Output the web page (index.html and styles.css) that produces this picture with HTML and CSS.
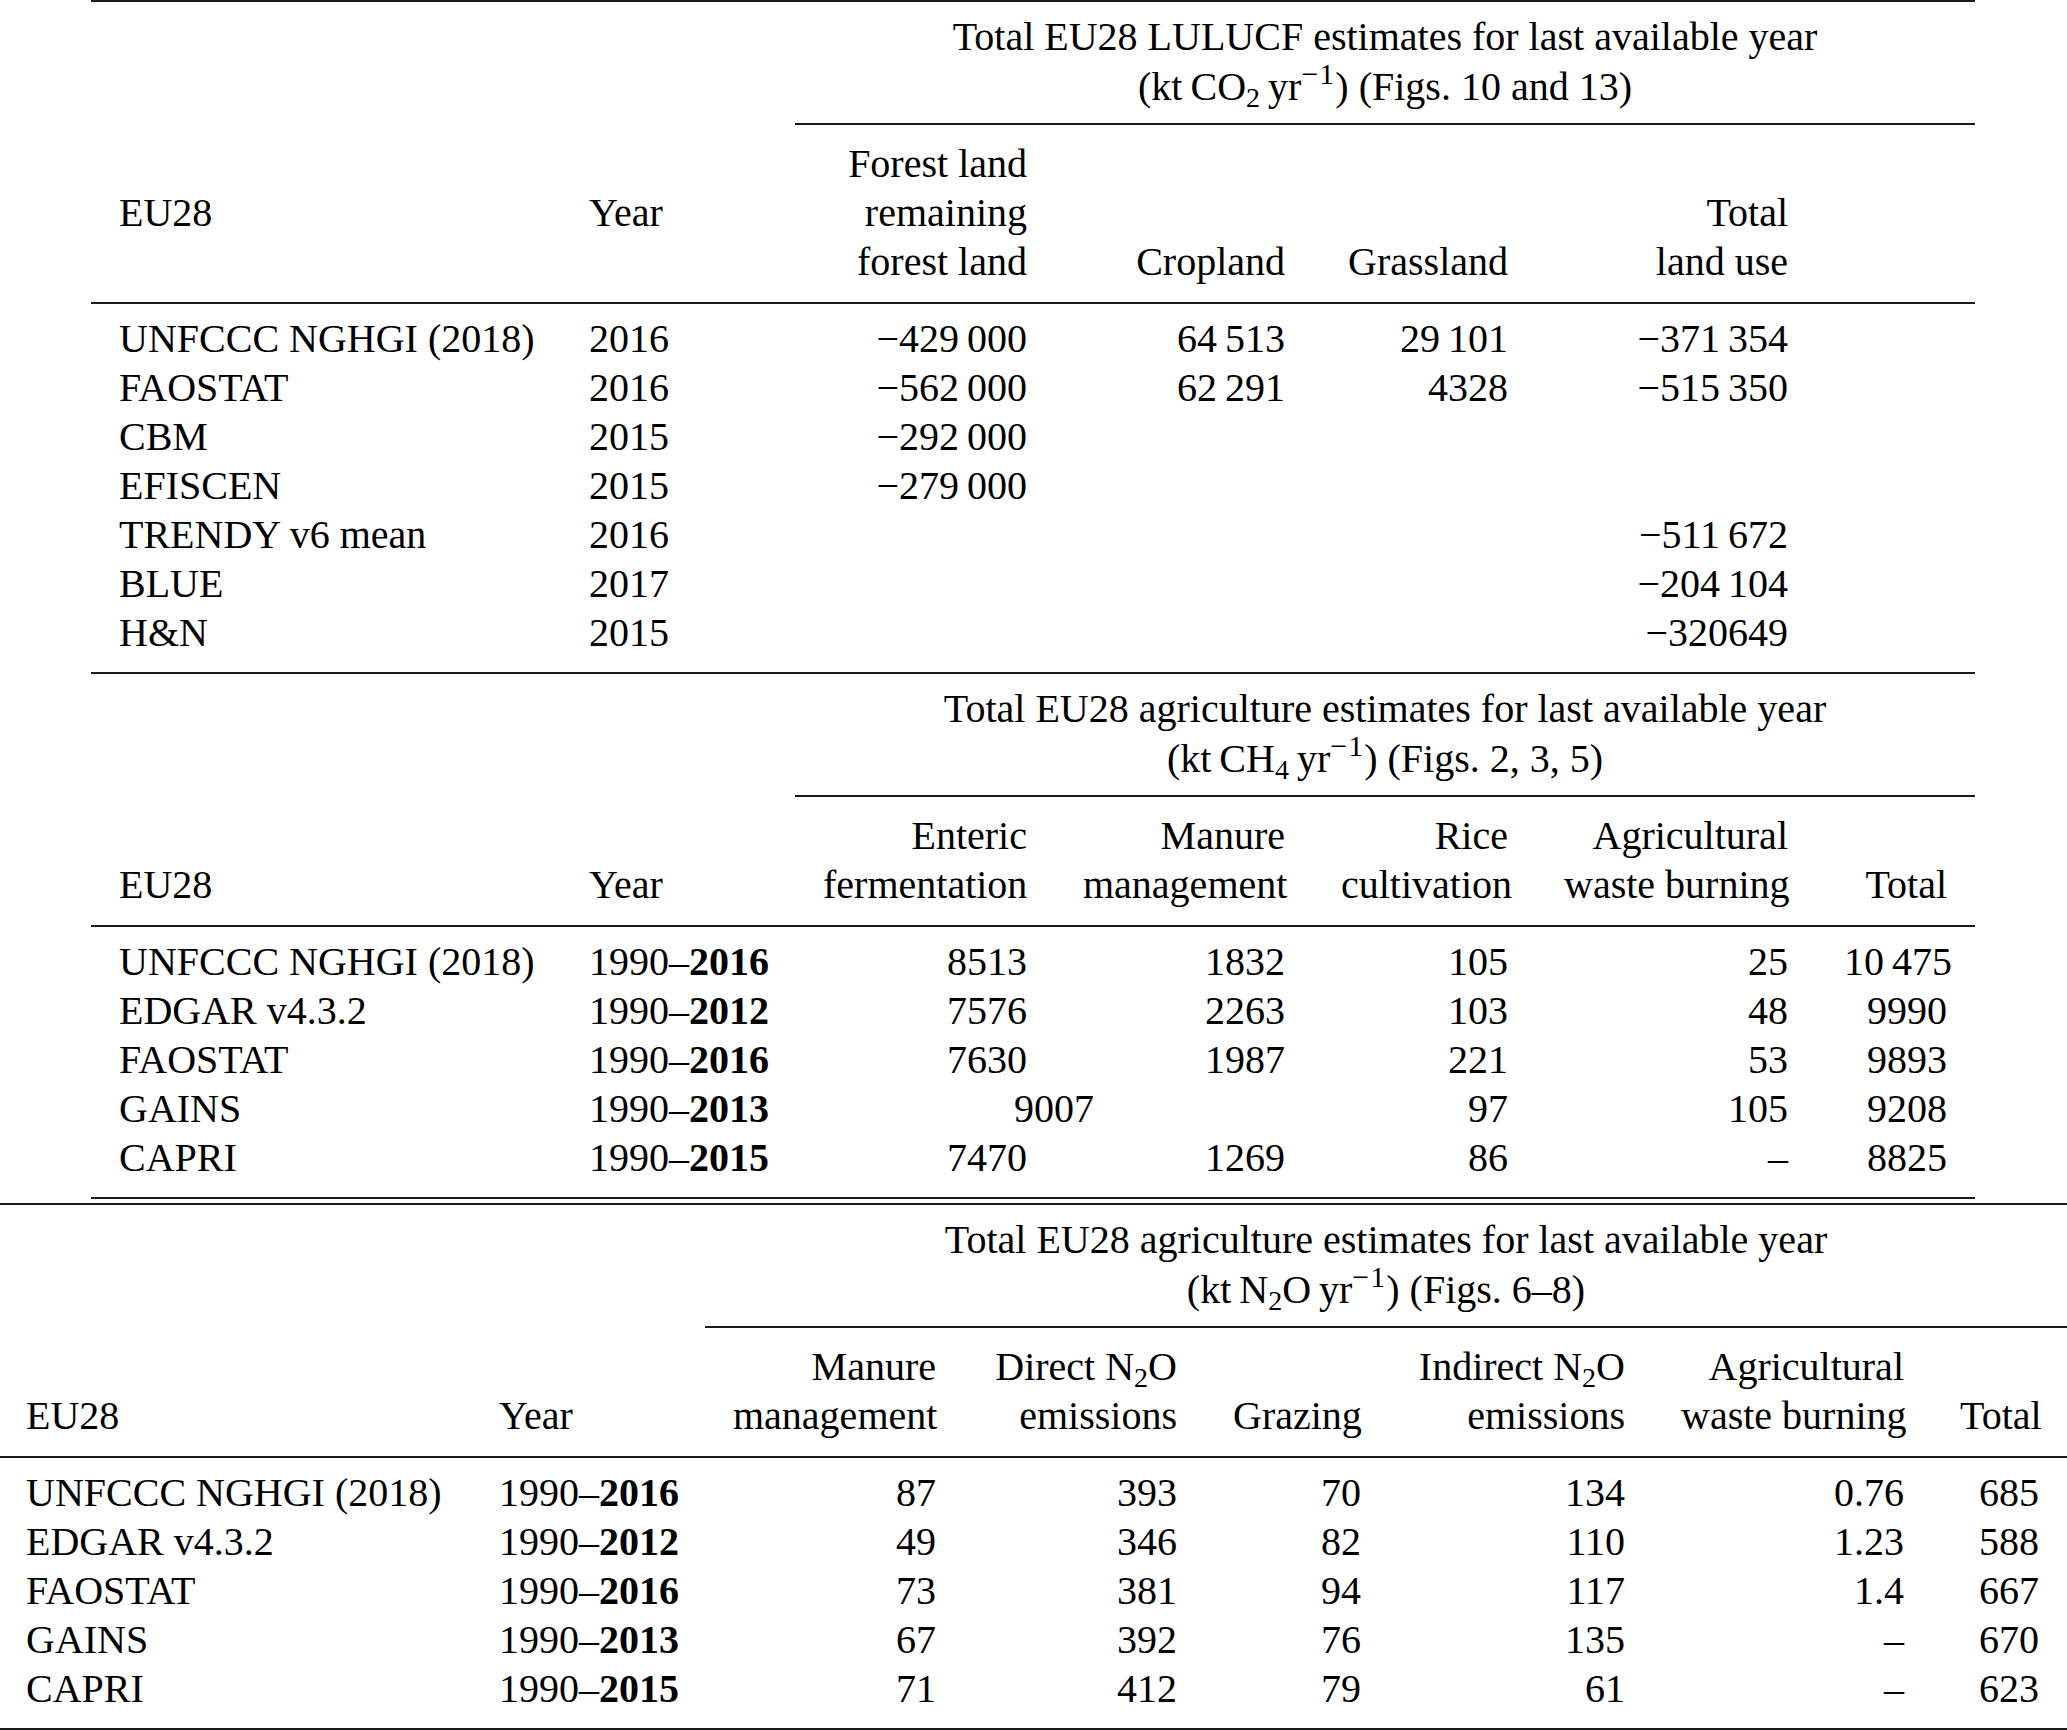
FILE: index.html
```html
<!DOCTYPE html>
<html lang="en">
<head>
<meta charset="utf-8">
<title>EU28 LULUCF and agriculture estimates</title>
<link rel="stylesheet" href="styles.css">
</head>
<body>
<div class="page">

  <!-- Table 1: LULUCF -->
  <div class="tbl narrow first-tbl">
    <div class="row title-row">
      <div class="title">Total EU28 LULUCF estimates for last available year<br>(kt&thinsp;CO<sub>2</sub>&thinsp;yr<sup>&minus;1</sup>) (Figs. 10 and 13)</div>
    </div>
    <div class="row head-row">
      <div class="cell mid">EU28</div>
      <div class="cell mid">Year</div>
      <div class="cell r">Forest land<br>remaining<br>forest land</div>
      <div class="cell r">Cropland</div>
      <div class="cell r">Grassland</div>
      <div class="cell r">Total<br>land use</div>
      <div class="cell"></div>
    </div>
    <div class="body">
      <div class="row"><div class="cell">UNFCCC NGHGI (2018)</div><div class="cell">2016</div><div class="cell r">&minus;429&thinsp;000</div><div class="cell r">64&thinsp;513</div><div class="cell r">29&thinsp;101</div><div class="cell r">&minus;371&thinsp;354</div><div class="cell"></div></div>
      <div class="row"><div class="cell">FAOSTAT</div><div class="cell">2016</div><div class="cell r">&minus;562&thinsp;000</div><div class="cell r">62&thinsp;291</div><div class="cell r">4328</div><div class="cell r">&minus;515&thinsp;350</div><div class="cell"></div></div>
      <div class="row"><div class="cell">CBM</div><div class="cell">2015</div><div class="cell r">&minus;292&thinsp;000</div><div class="cell"></div><div class="cell"></div><div class="cell"></div><div class="cell"></div></div>
      <div class="row"><div class="cell">EFISCEN</div><div class="cell">2015</div><div class="cell r">&minus;279&thinsp;000</div><div class="cell"></div><div class="cell"></div><div class="cell"></div><div class="cell"></div></div>
      <div class="row"><div class="cell">TRENDY v6 mean</div><div class="cell">2016</div><div class="cell"></div><div class="cell"></div><div class="cell"></div><div class="cell r">&minus;511&thinsp;672</div><div class="cell"></div></div>
      <div class="row"><div class="cell">BLUE</div><div class="cell">2017</div><div class="cell"></div><div class="cell"></div><div class="cell"></div><div class="cell r">&minus;204&thinsp;104</div><div class="cell"></div></div>
      <div class="row"><div class="cell">H&amp;N</div><div class="cell">2015</div><div class="cell"></div><div class="cell"></div><div class="cell"></div><div class="cell r">&minus;320649</div><div class="cell"></div></div>
    </div>
  </div>

  <!-- Table 2: CH4 -->
  <div class="tbl narrow">
    <div class="row title-row">
      <div class="title">Total EU28 agriculture estimates for last available year<br>(kt&thinsp;CH<sub>4</sub>&thinsp;yr<sup>&minus;1</sup>) (Figs. 2, 3, 5)</div>
    </div>
    <div class="row head-row">
      <div class="cell">EU28</div>
      <div class="cell">Year</div>
      <div class="cell r">Enteric<br>fermentation</div>
      <div class="cell r">Manure<br>management</div>
      <div class="cell r">Rice<br>cultivation</div>
      <div class="cell r">Agricultural<br>waste burning</div>
      <div class="cell r">Total</div>
    </div>
    <div class="body">
      <div class="row"><div class="cell">UNFCCC NGHGI (2018)</div><div class="cell">1990&ndash;<b>2016</b></div><div class="cell r">8513</div><div class="cell r">1832</div><div class="cell r">105</div><div class="cell r">25</div><div class="cell r">10&thinsp;475</div></div>
      <div class="row"><div class="cell">EDGAR v4.3.2</div><div class="cell">1990&ndash;<b>2012</b></div><div class="cell r">7576</div><div class="cell r">2263</div><div class="cell r">103</div><div class="cell r">48</div><div class="cell r">9990</div></div>
      <div class="row"><div class="cell">FAOSTAT</div><div class="cell">1990&ndash;<b>2016</b></div><div class="cell r">7630</div><div class="cell r">1987</div><div class="cell r">221</div><div class="cell r">53</div><div class="cell r">9893</div></div>
      <div class="row"><div class="cell">GAINS</div><div class="cell">1990&ndash;<b>2013</b></div><div class="cell c span2">9007</div><div class="cell r">97</div><div class="cell r">105</div><div class="cell r">9208</div></div>
      <div class="row"><div class="cell">CAPRI</div><div class="cell">1990&ndash;<b>2015</b></div><div class="cell r">7470</div><div class="cell r">1269</div><div class="cell r">86</div><div class="cell r">&ndash;</div><div class="cell r">8825</div></div>
    </div>
  </div>

  <!-- Table 3: N2O -->
  <div class="tbl wide">
    <div class="row title-row">
      <div class="title">Total EU28 agriculture estimates for last available year<br>(kt&thinsp;N<sub>2</sub>O&thinsp;yr<sup>&minus;1</sup>) (Figs. 6&ndash;8)</div>
    </div>
    <div class="row head-row">
      <div class="cell">EU28</div>
      <div class="cell">Year</div>
      <div class="cell r">Manure<br>management</div>
      <div class="cell r">Direct N<sub>2</sub>O<br>emissions</div>
      <div class="cell r">Grazing</div>
      <div class="cell r">Indirect N<sub>2</sub>O<br>emissions</div>
      <div class="cell r">Agricultural<br>waste burning</div>
      <div class="cell r">Total</div>
    </div>
    <div class="body">
      <div class="row"><div class="cell">UNFCCC NGHGI (2018)</div><div class="cell">1990&ndash;<b>2016</b></div><div class="cell r">87</div><div class="cell r">393</div><div class="cell r">70</div><div class="cell r">134</div><div class="cell r">0.76</div><div class="cell r">685</div></div>
      <div class="row"><div class="cell">EDGAR v4.3.2</div><div class="cell">1990&ndash;<b>2012</b></div><div class="cell r">49</div><div class="cell r">346</div><div class="cell r">82</div><div class="cell r">110</div><div class="cell r">1.23</div><div class="cell r">588</div></div>
      <div class="row"><div class="cell">FAOSTAT</div><div class="cell">1990&ndash;<b>2016</b></div><div class="cell r">73</div><div class="cell r">381</div><div class="cell r">94</div><div class="cell r">117</div><div class="cell r">1.4</div><div class="cell r">667</div></div>
      <div class="row"><div class="cell">GAINS</div><div class="cell">1990&ndash;<b>2013</b></div><div class="cell r">67</div><div class="cell r">392</div><div class="cell r">76</div><div class="cell r">135</div><div class="cell r">&ndash;</div><div class="cell r">670</div></div>
      <div class="row"><div class="cell">CAPRI</div><div class="cell">1990&ndash;<b>2015</b></div><div class="cell r">71</div><div class="cell r">412</div><div class="cell r">79</div><div class="cell r">61</div><div class="cell r">&ndash;</div><div class="cell r">623</div></div>
    </div>
  </div>

</div>
</body>
</html>
```

FILE: styles.css
```css
html, body {
  margin: 0;
  padding: 0;
  background: #ffffff;
}

body {
  font-family: "Liberation Serif", "Times New Roman", serif;
  font-size: 40px;
  color: #000000;
  width: 2067px;
  height: 1730px;
  overflow: hidden;
}

.page {
  display: flex;
  flex-direction: column;
  align-items: flex-start;
}

.tbl {
  border-bottom: 2px solid #1a1a1a;
}

.narrow {
  margin-left: 91px;
  width: 1884px;
  --cols: 470px 234px 260px 258px 223px 280px 159px;
}

.first-tbl {
  border-top: 2px solid #1a1a1a;
}

.wide {
  margin-top: 4px;
  width: 2067px;
  border-top: 2px solid #1a1a1a;
  --cols: 471px 234px 259px 241px 184px 264px 279px 135px;
}

.row {
  display: grid;
  grid-template-columns: var(--cols);
  line-height: 49px;
}

.cell {
  padding: 0 28px;
  white-space: nowrap;
  min-width: 0;
}

.wide .row > .cell:first-child {
  padding-left: 26px;
}

.r {
  text-align: right;
}

.c {
  text-align: center;
}

.span2 {
  grid-column: span 2;
}

/* Title row with partial rule below */
.title-row {
  padding-top: 10px;
}

.title {
  grid-column: 3 / -1;
  text-align: center;
  line-height: 50px;
  padding-bottom: 11px;
  border-bottom: 2px solid #1a1a1a;
  white-space: nowrap;
}

/* Column headings */
.head-row {
  padding-top: 14px;
  padding-bottom: 16px;
  border-bottom: 2px solid #1a1a1a;
  align-items: end;
}

.head-row .mid {
  align-self: center;
}

/* Body rows */
.body {
  padding-top: 10px;
  padding-bottom: 15px;
}

b {
  font-weight: bold;
}

sub, sup {
  line-height: 0;
}

sub {
  font-size: 28px;
  vertical-align: -7px;
}

sup {
  font-size: 30px;
  vertical-align: 16px;
  letter-spacing: 1px;
}
```
